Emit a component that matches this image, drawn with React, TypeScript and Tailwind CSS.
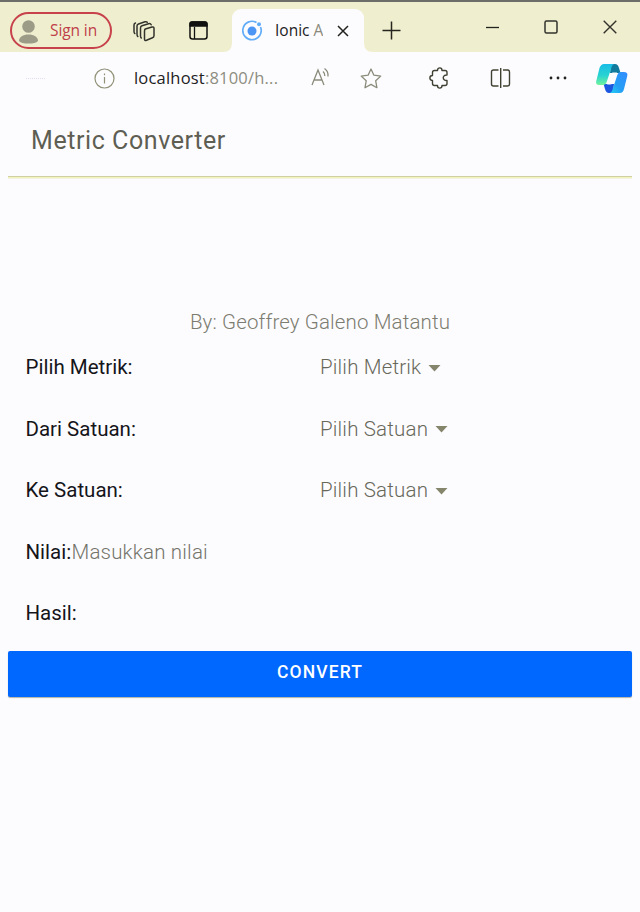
import React from "react";

function Row({ label, children, labelClass = "w-[294.5px]" }: { label: string; labelClass?: string; children?: React.ReactNode }) {
  return (
    <div className="flex h-[61.5px] items-center whitespace-nowrap pl-[17.5px] text-[20.5px]">
      <div className={"shrink-0 text-[#15151a] " + labelClass}>{label}</div>
      {children}
    </div>
  );
}

function Select({ text }: { text: string }) {
  return (
    <div className="flex items-center gap-[7px] font-light tracking-[0.18px] text-[#68685a]">
      <span>{text}</span>
      <svg width="13" height="8" viewBox="0 0 13 8"><path d="M.5 1h12l-6 6.500z" fill="#85856c" /></svg>
    </div>
  );
}

function TabStrip() {
  return (
    <div className="flex h-[52px] items-start border-t-2 border-[#6c6c69] bg-[#efefd0]">
      <div className="ml-[10px] mt-[10px] flex h-[37px] w-[102px] items-center rounded-full border-2 border-[#c8424b] pl-[6px]">
        <svg width="22" height="26" viewBox="0 0 22 26" fill="#9b9b87">
          <circle cx="10.500" cy="8.500" r="6.300" />
          <path d="M1 23c0-4 4-6.500 9.500-6.500S20 19 20 23c-1.500 2-5 2.500-9.500 2.500S2.500 25 1 23z" />
        </svg>
        <span className="ml-[10px] whitespace-nowrap text-[15.5px] tracking-[-0.1px] text-[#bf4048]">Sign in</span>
      </div>
      <svg className="ml-[21px] mt-[17px]" width="24" height="23" viewBox="0 0 24 23" fill="none" stroke="#33332c" strokeWidth="1.500" strokeLinejoin="round" strokeLinecap="round">
        <path d="M12.300 10 19 8q2-.5 2 1.500v7q0 1.800-1.500 2.300l-6 2.500q-2 .7-2-1.300v-7.700q0-1.800.8-2.300z" />
        <path d="M8.300 19Q7.500 18.500 7.500 17V9q0-1.700 1.500-2.200l6.500-2.100q2-.5 2.700 1" />
        <path d="M4.800 17.500Q4 17 4 15V7q0-1.500 1.500-2l6.500-2.200q1.500-.4 2.300.5" />
        <path d="M1.800 14.500Q1 14 1 12.500V6q0-1.500 1.500-2" />
      </svg>
      <svg className="ml-[32px] mt-[19px]" width="20" height="20" viewBox="0 0 20 20" fill="none">
        <rect x="1" y="1" width="17" height="17" rx="2.500" stroke="#11110f" strokeWidth="1.500" />
        <path d="M1 2.500Q1 1 3 1h13q2 0 2 2v2H1z" fill="#11110f" stroke="#11110f" strokeWidth="1.300" />
        <path d="M5.500 6v12" stroke="#11110f" strokeWidth="1.300" />
      </svg>
      <div className="relative ml-[23px] mt-[7px] flex h-[43px] w-[132px] items-center rounded-t-[9px] bg-[#fcfcff] pl-[10px]">
        <svg className="absolute -left-[9px] bottom-0" width="9" height="9"><path d="M9 0v9H0Q9 9 9 0z" fill="#fcfcff" /></svg>
        <svg className="absolute -right-[9px] bottom-0" width="9" height="9"><path d="M0 0v9h9Q0 9 0 0z" fill="#fcfcff" /></svg>
        <svg width="21" height="22" viewBox="0 0 21 22" fill="none">
          <path d="M14.500 2.500A9.200 9.200 0 1 0 18.500 7" stroke="#62adf8" strokeWidth="1.700" />
          <circle cx="10" cy="11" r="4.500" fill="#4b96f5" />
          <circle cx="17" cy="4.300" r="2" fill="#62adf8" />
        </svg>
        <span className="ml-[12px] w-[48px] overflow-hidden whitespace-nowrap text-[15.5px] text-[#22221e]">Ionic <span className="text-[#8a8a7b]">A</span></span>
        <svg className="ml-[14px]" width="12" height="12" viewBox="0 0 12 12" stroke="#22221e" strokeWidth="1.500"><path d="m1 1 10 10M11 1 1 11" /></svg>
      </div>
      <svg className="ml-[18px] mt-[19px]" width="19" height="19" viewBox="0 0 19 19" stroke="#26261e" strokeWidth="1.500"><path d="M9.500.5v18M.5 9.500h18" /></svg>
      <svg className="ml-[85px] mt-[24px]" width="14" height="3"><path d="M0 1.500h13" stroke="#22221e" strokeWidth="1.300" /></svg>
      <svg className="ml-[44px] mt-[18px]" width="14" height="14" fill="none"><rect x="1" y="1" width="12" height="12" rx="1.500" stroke="#33332c" strokeWidth="1.500" /></svg>
      <svg className="ml-[45px] mt-[18px]" width="14" height="14" stroke="#33332c" strokeWidth="1.400"><path d="m.7.7 12.600 12.600M13.300.7.7 13.300" /></svg>
    </div>
  );
}

function AddressBar() {
  return (
    <div className="flex h-[52px] items-center">
      <div className="ml-[26px] w-[19px] border-t border-dotted border-[#dedef0]" />
      <svg className="ml-[49px]" width="21" height="21" viewBox="0 0 21 21" fill="none" stroke="#929278" strokeWidth="1.200"><circle cx="10.500" cy="10.500" r="9.500" /><path d="M10.500 9v6.500M10.500 5.500v1.700" /></svg>
      <span className="ml-[19px] w-[145px] whitespace-nowrap text-[16.5px] tracking-[0.2px] text-[#22221e]">localhost<span className="text-[#8d8d80]">:8100/h...</span></span>
      <svg className="-mt-[2px] ml-[32px]" width="21" height="20" viewBox="0 0 21 20" fill="none" stroke="#8b8b7b" strokeWidth="1.300">
        <path d="m1 18 6-15 6 15M3.200 13h7.600M12 4.500q2 1.700 1.800 4.500M13.500 1.500q4 2.700 3.500 8" />
      </svg>
      <svg className="ml-[28px]" width="22" height="21" viewBox="0 0 22 21" fill="none" stroke="#8b8b7b" strokeWidth="1.300" strokeLinejoin="round"><path d="m11 1 2.900 6.200 6.800.9-5 4.700 1.200 6.900-5.900-3.300-6 3.300 1.200-6.900-5-4.700 6.900-.9z" /></svg>
      <svg className="ml-[47px]" width="20" height="22" viewBox="0 0 20 22" fill="none" stroke="#414133" strokeWidth="1.400" strokeLinejoin="round"><path d="M5.500 3.500h3C8.500 0 13 0 13 3.500h3q2 0 2 2V8c-5-.5-5 6 0 5.500v3q0 2-2 2h-3c0 3.500-4.500 3.500-4.500 0h-3q-2 0-2-2v-3c-3.500 0-3.500-5 0-5V5.500q0-2 2-2z" /></svg>
      <svg className="ml-[41px]" width="22" height="20" viewBox="0 0 22 20" fill="none" stroke="#414133" strokeWidth="1.400"><path d="M8.500 2h-5Q1.500 2 1.500 4v12q0 2 2 2h5M13 2h4.500q2 0 2 2v12q0 2-2 2H13M10.700 0v20" /></svg>
      <svg className="ml-[37px]" width="18" height="4" fill="#22221e"><circle cx="2" cy="2" r="1.400" /><circle cx="9" cy="2" r="1.400" /><circle cx="16" cy="2" r="1.400" /></svg>
      <svg className="ml-[29px]" width="32" height="29" viewBox="0 0 32 29">
        <defs>
          <linearGradient id="left" x1="0" y1="0" x2="0" y2="1"><stop stopColor="#19bce7" /><stop offset=".55" stopColor="#29d3d1" /><stop offset="1" stopColor="#71f39c" /></linearGradient>
          <linearGradient id="right" x1="1" y1="0" x2="0" y2="1"><stop stopColor="#348cff" /><stop offset=".6" stopColor="#249ff5" /><stop offset="1" stopColor="#24d4f2" /></linearGradient>
        </defs>
        <path d="M15 0h4q3 0 4 4l1.500 5H14z" fill="#117a9d" />
        <path d="M17 29h-4q-3 0-4-4l-1.500-5H18z" fill="#1c57df" />
        <path d="M8 0h11q-3 0-4 5l-4 12q-1 4-4 4H3q-4 0-2.500-5L3.500 4Q5 0 8 0z" fill="url(#left)" />
        <path d="M24 29H13q3 0 4-5l4-12q1-4 4-4h3q4.500 0 3 5l-3 12q-1 4-4 4z" fill="url(#right)" />
        <path d="M16.500 8.500H21q-1 1-1.500 3.500l-2 6q-.7 2.500-3.500 2.500h-3q1.500-1 2-3l1.800-6q.7-2.500 1.700-3z" fill="#fcfcff" />
      </svg>
    </div>
  );
}

export default function App() {
  return (
    <div className="flex h-[912px] w-[640px] flex-col overflow-hidden bg-[#fcfcff] font-[Roboto,sans-serif]">
      <div className="font-['Open_Sans','Noto_Sans',sans-serif]">
        <TabStrip />
        <AddressBar />
      </div>
      <main className="px-2">
        <header className="flex h-[73px] items-center border-b border-[#cfcfa4] pl-[23px] pt-[2px] shadow-[0_1px_0_#f4f4bd,0_2px_0_#f2f2df]">
          <h1 className="text-[25px] tracking-[0.57px] text-[#5e5e53]">Metric Converter</h1>
        </header>
        <p className="mt-[131px] flex h-[28px] items-center justify-center whitespace-nowrap text-[20.5px] font-light tracking-[0.13px] text-[#7c7c70]">By: Geoffrey Galeno Matantu</p>
        <form className="pt-px">
          <Row label="Pilih Metrik:"><Select text="Pilih Metrik" /></Row>
          <Row label="Dari Satuan:"><Select text="Pilih Satuan" /></Row>
          <Row label="Ke Satuan:"><Select text="Pilih Satuan" /></Row>
          <Row label="Nilai:" labelClass="w-[46px]"><span className="font-light tracking-[0.18px] text-[#74746a]">Masukkan nilai</span></Row>
          <Row label="Hasil:" />
          <button type="button" className="mt-[6px] block h-[46px] w-full rounded-[2px] bg-[#0067ff] pb-[2px] text-[17.5px] font-medium tracking-[1.1px] text-white shadow-[0_1px_1px_#b4b4a5]">CONVERT</button>
        </form>
      </main>
    </div>
  );
}
